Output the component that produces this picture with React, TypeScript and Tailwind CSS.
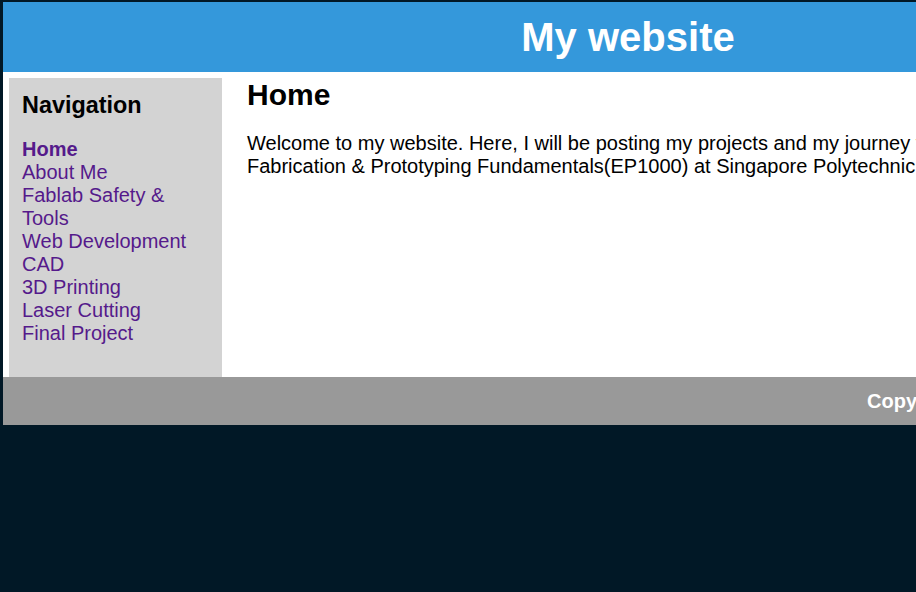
import React from 'react';

const navLinks = [
    'About Me',
    'Fablab Safety & Tools',
    'Web Development',
    'CAD',
    '3D Printing',
    'Laser Cutting',
    'Final Project',
];

const App: React.FC = () => {
    return (
        <div className="min-h-screen w-full overflow-hidden bg-[#011826] pl-[3px] pt-[2px] font-['Liberation_Sans',Arial,sans-serif] text-[20px] leading-[23px] text-black">
            <div className="w-[1250px] bg-white">
                <header className="flex h-[70px] items-center justify-center bg-[#3498db]">
                    <h1 className="text-[40px] font-bold leading-[46px] text-white">My website</h1>
                </header>

                <div className="flex pl-[6px] pt-[6px]">
                    <aside className="w-[213px] shrink-0 bg-[#d3d3d3] px-[13px] pb-[32px] pt-[14px]">
                        <h3 className="mb-[19px] text-[23.4px] font-bold leading-[27px]">Navigation</h3>
                        <ul>
                            <li>
                                <a href="#" className="block font-bold text-[#551a8b]">Home</a>
                            </li>
                            {navLinks.map((link) => (
                                <li key={link}>
                                    <a href="#" className="block text-[#551a8b]">{link}</a>
                                </li>
                            ))}
                        </ul>
                    </aside>

                    <main className="flex-1 pl-[25px] pr-[25px]">
                        <h2 className="text-[30px] font-bold leading-[34.5px]">Home</h2>
                        <p className="mt-[19px]">
                            Welcome to my website. Here, I will be posting my projects and my journey through the module Digital
                            Fabrication &amp; Prototyping Fundamentals(EP1000) at Singapore Polytechnic.
                        </p>
                    </main>
                </div>

                <footer className="flex h-[48px] items-center bg-[#999999] pl-[864px]">
                    <p className="whitespace-nowrap font-bold text-white">Copyright &copy; 2024 My website</p>
                </footer>
            </div>
        </div>
    );
};

export default App;
